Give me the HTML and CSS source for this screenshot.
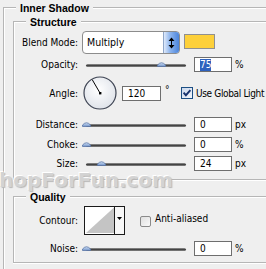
FILE: index.html
```html
<!DOCTYPE html>
<html>
<head>
<meta charset="utf-8">
<link rel="stylesheet" href="styles.css">
</head>
<body>
<div class="group outer">
  <div class="legend"><span class="lg">Inner Shadow</span></div>
  <div class="group inner struct">
    <div class="legend"><span class="lg">Structure</span></div>

    <div class="row r-blend">
      <span class="lbl">Blend Mode:</span>
      <div class="select">
        <span class="sel-text">Multiply</span>
        <span class="spin">
          <svg width="7" height="12" viewBox="0 0 7 12"><path d="M3.5 0.5 L6.5 4 L0.5 4 Z M3 4 H4 V8 H3 Z M0.5 8 L6.5 8 L3.5 11.5 Z" fill="#000"/></svg>
        </span>
      </div>
      <span class="swatch"></span>
    </div>

    <div class="row r-opacity">
      <span class="lbl">Opacity:</span>
      <div class="slider"><span class="track"></span><svg class="thumb" style="left:75%" width="9" height="6" viewBox="0 0 9 6"><defs><linearGradient id="tg1" x1="0" y1="0" x2="0" y2="1"><stop offset="0" stop-color="#d6e3f6"/><stop offset="1" stop-color="#6d91c8"/></linearGradient></defs><path d="M0.5 5.5 L0.5 4 Q4.5 -0.5 8.5 4 L8.5 5.5 Z" fill="url(#tg1)" stroke="#5a76a6" stroke-width="0.8"/></svg></div>
      <span class="field"><span class="hl">75</span></span>
      <span class="unit">%</span>
    </div>

    <div class="row r-angle">
      <span class="lbl">Angle:</span>
      <svg class="dial" width="34" height="34" viewBox="0 0 34 34">
        <defs><radialGradient id="dg" cx="45%" cy="40%" r="65%"><stop offset="0" stop-color="#ffffff"/><stop offset="1" stop-color="#dde1e8"/></radialGradient></defs>
        <circle cx="17" cy="17" r="16" fill="url(#dg)" stroke="#3f4554" stroke-width="1.2"/>
        <line x1="17" y1="17" x2="9.2" y2="3.6" stroke="#000" stroke-width="1"/>
        <rect x="16" y="16" width="2.4" height="2.4" fill="#000"/>
      </svg>
      <span class="field f-angle">120</span>
      <span class="deg">°</span>
      <svg class="check" width="12" height="12" viewBox="0 0 12 12">
        <defs><linearGradient id="cg" x1="0" y1="0" x2="1" y2="1"><stop offset="0" stop-color="#c8d6ec"/><stop offset="1" stop-color="#f6f8fc"/></linearGradient></defs>
        <rect x="0.5" y="0.5" width="11" height="11" fill="url(#cg)" stroke="#1d4f84"/>
        <path d="M2.6 5.6 L4.9 8.2 L9.4 3.2" fill="none" stroke="#17326e" stroke-width="1.9"/>
      </svg>
      <span class="cb-text gl">Use Global Light</span>
    </div>

    <div class="row r-dist">
      <span class="lbl">Distance:</span>
      <div class="slider"><span class="track"></span><svg class="thumb" style="left:0%" width="9" height="6" viewBox="0 0 9 6"><defs><linearGradient id="tg2" x1="0" y1="0" x2="0" y2="1"><stop offset="0" stop-color="#d6e3f6"/><stop offset="1" stop-color="#6d91c8"/></linearGradient></defs><path d="M0.5 5.5 L0.5 4 Q4.5 -0.5 8.5 4 L8.5 5.5 Z" fill="url(#tg2)" stroke="#5a76a6" stroke-width="0.8"/></svg></div>
      <span class="field">0</span>
      <span class="unit">px</span>
    </div>

    <div class="row r-choke">
      <span class="lbl">Choke:</span>
      <div class="slider"><span class="track"></span><svg class="thumb" style="left:0%" width="9" height="6" viewBox="0 0 9 6"><defs><linearGradient id="tg3" x1="0" y1="0" x2="0" y2="1"><stop offset="0" stop-color="#d6e3f6"/><stop offset="1" stop-color="#6d91c8"/></linearGradient></defs><path d="M0.5 5.5 L0.5 4 Q4.5 -0.5 8.5 4 L8.5 5.5 Z" fill="url(#tg3)" stroke="#5a76a6" stroke-width="0.8"/></svg></div>
      <span class="field">0</span>
      <span class="unit">%</span>
    </div>

    <div class="row r-size">
      <span class="lbl">Size:</span>
      <div class="slider"><span class="track"></span><svg class="thumb" style="left:15%" width="9" height="6" viewBox="0 0 9 6"><defs><linearGradient id="tg4" x1="0" y1="0" x2="0" y2="1"><stop offset="0" stop-color="#d6e3f6"/><stop offset="1" stop-color="#6d91c8"/></linearGradient></defs><path d="M0.5 5.5 L0.5 4 Q4.5 -0.5 8.5 4 L8.5 5.5 Z" fill="url(#tg4)" stroke="#5a76a6" stroke-width="0.8"/></svg></div>
      <span class="field">24</span>
      <span class="unit">px</span>
    </div>
  </div>

  <div class="group inner quality">
    <div class="legend"><span class="lg">Quality</span></div>
    <div class="row r-contour">
      <span class="lbl">Contour:</span>
      <svg class="contour" width="41" height="29" viewBox="0 0 41 29">
        <rect x="0.5" y="0.5" width="40" height="28" fill="#fff" stroke="#1a1a1a"/>
        <polygon points="2,27 30,1.5 30,27" fill="#c4c4c4"/>
        <line x1="30.5" y1="1" x2="30.5" y2="28" stroke="#1a1a1a"/>
        <rect x="31" y="1" width="9" height="27" fill="#f7f7f7"/>
        <polygon points="33,11 38,11 35.5,14" fill="#000"/>
      </svg>
      <svg class="check-aa" width="11" height="11" viewBox="0 0 11 11">
        <defs><linearGradient id="ag" x1="0" y1="0" x2="1" y2="1"><stop offset="0" stop-color="#dedede"/><stop offset="1" stop-color="#fbfbfb"/></linearGradient></defs>
        <rect x="0.5" y="0.5" width="10" height="10" rx="1.5" fill="url(#ag)" stroke="#8a8a8a"/>
      </svg>
      <span class="cb-text aa">Anti-aliased</span>
    </div>
    <div class="row r-noise">
      <span class="lbl">Noise:</span>
      <div class="slider"><span class="track"></span><svg class="thumb" style="left:0%" width="9" height="6" viewBox="0 0 9 6"><defs><linearGradient id="tg5" x1="0" y1="0" x2="0" y2="1"><stop offset="0" stop-color="#d6e3f6"/><stop offset="1" stop-color="#6d91c8"/></linearGradient></defs><path d="M0.5 5.5 L0.5 4 Q4.5 -0.5 8.5 4 L8.5 5.5 Z" fill="url(#tg5)" stroke="#5a76a6" stroke-width="0.8"/></svg></div>
      <span class="field">0</span>
      <span class="unit">%</span>
    </div>
  </div>
</div>
<div class="watermark">hopForFun.com</div>
</body>
</html>
```

FILE: styles.css
```css
html, body {
  margin: 0;
  padding: 0;
}
body {
  background: #efefef;
  width: 266px;
  height: 269px;
  overflow: hidden;
  position: relative;
  font-family: "DejaVu Sans Condensed", "DejaVu Sans", sans-serif;
  font-size: 10px;
  color: #000;
}
.group {
  border: 1px solid #b6b6b6;
  border-right: none;
  box-shadow: inset 1px 1px 0 #fff;
}
.outer {
  margin-top: 7px;
  margin-left: 3px;
  border-bottom: none;
  height: 262px;
  box-sizing: border-box;
}
.inner {
  margin-left: 9px;
  box-shadow: inset 1px 1px 0 #fff, 0 1px 0 #fff;
}
.struct {
  margin-top: 6px;
  padding-bottom: 8px;
}
.quality {
  margin-top: 16px;
  padding-bottom: 6px;
}
.legend {
  margin-top: -7px;
  height: 14px;
}
.lg {
  display: inline-block;
  height: 14px;
  line-height: 14px;
  margin-left: 12px;
  padding: 0 4px;
  background: #efefef;
  font-family: "Liberation Sans", Arial, sans-serif;
  font-weight: bold;
  font-size: 10.5px;
}
.row {
  display: flex;
  align-items: center;
}
.lbl {
  flex: none;
  width: 64px;
  text-align: right;
  white-space: nowrap;
}
.r-blend { margin-top: 2px; height: 23px; }
.r-opacity { margin-top: 3px; height: 15px; }
.r-angle { margin-top: 4px; height: 34px; }
.r-dist { margin-top: 7px; height: 15px; }
.r-choke { margin-top: 5px; height: 15px; }
.r-size { margin-top: 4px; height: 15px; }
.r-contour { margin-top: 2px; height: 29px; }
.r-noise { margin-top: 6px; height: 15px; }

.select {
  flex: none;
  margin-left: 4px;
  width: 98px;
  height: 23px;
  box-sizing: border-box;
  border: 1px solid #8c8c8c;
  border-radius: 4px;
  background: #fff;
  display: flex;
  overflow: hidden;
}
.sel-text {
  flex: 1;
  padding-left: 4px;
  line-height: 21px;
  font-size: 10.5px;
}
.spin {
  width: 15px;
  border-left: 1px solid #8fa6c8;
  background: linear-gradient(to right, #dfeafb, #8fb6ee 40%, #4a84dc);
  display: flex;
  align-items: center;
  justify-content: center;
}
.swatch {
  flex: none;
  align-self: flex-start;
  margin-top: 3px;
  margin-left: 4px;
  width: 31px;
  height: 15px;
  box-sizing: border-box;
  border: 1px solid #909090;
  background: #fdd03a;
}
.slider {
  flex: none;
  position: relative;
  margin-left: 8px;
  width: 100px;
  height: 15px;
}
.track {
  display: block;
  margin-top: 7px;
  height: 3px;
  border-radius: 2px;
  background: linear-gradient(#9a9a9a, #444 50%, #8a8a8a);
}
.thumb {
  position: absolute;
  top: 4px;
  margin-left: -4px;
}
.field {
  flex: none;
  margin-left: 8px;
  width: 38px;
  height: 15px;
  box-sizing: border-box;
  border: 1px solid #6e6e6e;
  background: #fff;
  padding-left: 5px;
  line-height: 13px;
}
.hl {
  display: inline-block;
  background: #2e62be;
  color: #fff;
  line-height: 12px;
}
.unit {
  margin-left: 3px;
}
.dial {
  flex: none;
  margin-left: 5px;
}
.f-angle {
  margin-left: 5px;
  width: 39px;
}
.deg {
  flex: none;
  width: 20px;
  box-sizing: border-box;
  padding-left: 4px;
  align-self: flex-start;
  margin-top: 8px;
}
.check {
  flex: none;
}
.cb-text {
  margin-left: 3px;
  white-space: nowrap;
}
.gl {
  letter-spacing: -0.35px;
}
.contour {
  flex: none;
  margin-left: 6px;
}
.check-aa {
  flex: none;
  margin-left: 15px;
  align-self: flex-start;
  margin-top: 10px;
}
.aa {
  margin-left: 4px;
  align-self: flex-start;
  margin-top: 7px;
}
.watermark {
  position: absolute;
  left: -1px;
  top: 170px;
  font-family: "DejaVu Sans", sans-serif;
  font-weight: bold;
  font-size: 20px;
  line-height: 20px;
  white-space: nowrap;
  color: #d3d3d3;
  text-shadow: -1px -1px 0 #fff, 1px 1px 1px #b8b8b8;
}
```
